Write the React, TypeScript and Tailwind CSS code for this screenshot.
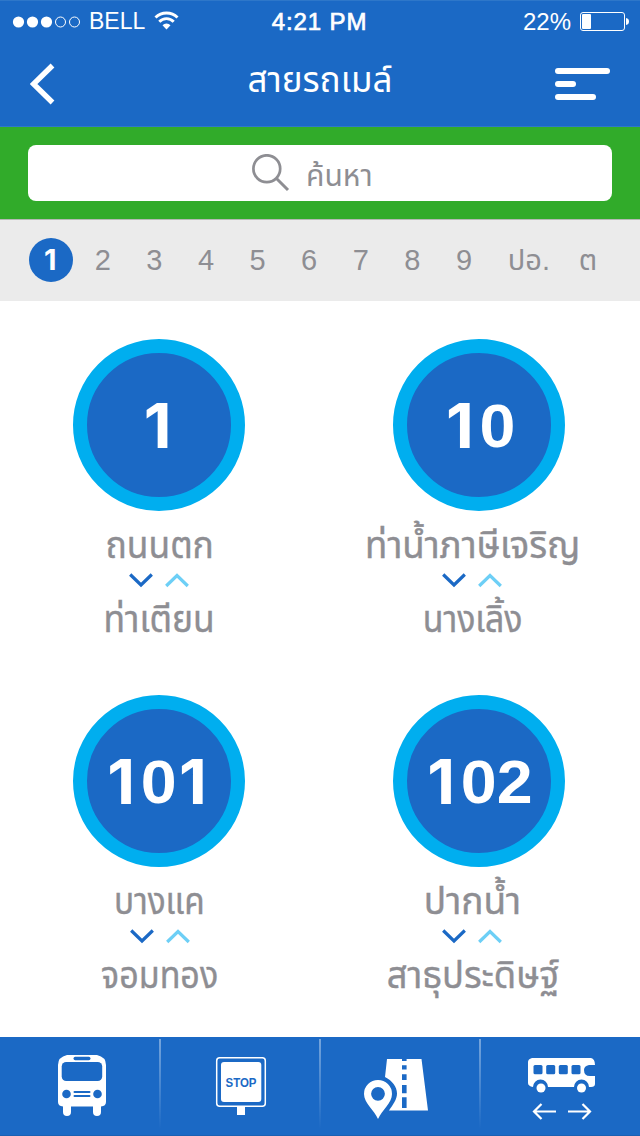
import type { ReactNode } from "react";

type Route = { no: string; from: string; to: string; fromClass: string; toClass: string };

const routes: Route[] = [
  { no: "1", from: "ถนนตก", to: "ท่าเตียน", fromClass: "scale-x-[0.955]", toClass: "scale-x-[0.957]" },
  { no: "10", from: "ท่าน้ำภาษีเจริญ", to: "นางเลิ้ง", fromClass: "scale-x-[0.99]", toClass: "scale-x-[0.915]" },
  { no: "101", from: "บางแค", to: "จอมทอง", fromClass: "scale-x-[0.9]", toClass: "scale-x-[0.92]" },
  { no: "102", from: "ปากน้ำ", to: "สาธุประดิษฐ์", fromClass: "", toClass: "scale-x-[0.98]" },
];

const digits = ["2", "3", "4", "5", "6", "7", "8", "9"];

// Inter has a "1" without a foot, the other digits stay in Liberation Sans
function Digits({ value }: { value: string }) {
  return (
    <span className="flex font-bold">
      {value.split("").map((d, i) => (
        <span
          key={i}
          className={`flex w-[0.556em] justify-center ${d === "1" ? "pr-[0.05em] font-['Inter',sans-serif]" : ""}`}
        >
          {d}
        </span>
      ))}
    </span>
  );
}

function StatusBar() {
  return (
    <div className="flex h-[41px] items-center justify-between pl-3 pr-[10px] text-white">
      <div className="flex w-[240px] items-center">
        <svg width="70" height="14" viewBox="0 0 70 14" fill="#fff">
          <circle cx="6.5" cy="7" r="5.6" />
          <circle cx="20.5" cy="7" r="5.6" />
          <circle cx="34.5" cy="7" r="5.6" />
          <circle cx="48.5" cy="7" r="5" fill="none" stroke="#fff" />
          <circle cx="62.5" cy="7" r="5" fill="none" stroke="#fff" />
        </svg>
        <span className="ml-[7px] text-[23px] leading-[41px]">BELL</span>
        <svg className="ml-[9px] -mt-[2px]" width="25" height="19" viewBox="0 0 25 19" fill="none" stroke="#fff" strokeWidth="2.9">
          <path d="M1.5 6.6a15.5 15.5 0 0 1 22 0" />
          <path d="M5.3 10.7a10 10 0 0 1 14.4 0" />
          <path d="M12.5 18.4l-4-4.2a5.7 5.7 0 0 1 8 0z" fill="#fff" stroke="none" />
        </svg>
      </div>
      <span className="-ml-[3px] text-[24px] leading-[41px] tracking-[0.9px] [-webkit-text-stroke:0.7px_white]">4:21 PM</span>
      <div className="flex w-[240px] items-center justify-end">
        <span className="mr-[9px] text-[24px] leading-[41px]">22%</span>
        <svg width="50" height="20" viewBox="0 0 50 20" fill="#fff">
          <rect x="0.5" y="0.5" width="44" height="18" rx="2.5" fill="none" stroke="#fff" />
          <rect x="2" y="2" width="9" height="15" rx="1" />
          <path d="M46 6c2 .3 3 1.5 3 3.500s-1 3.200-3 3.500z" />
        </svg>
      </div>
    </div>
  );
}

function TitleBar() {
  return (
    <div className="flex h-[83px] items-center justify-between px-[30px] text-white">
      <div className="w-[55px]">
        <svg width="26" height="42" viewBox="0 0 26 42" fill="none" stroke="#fff" strokeWidth="5.400">
          <path d="M22.500 2.500L3.500 21l19 18.500" />
        </svg>
      </div>
      <h1 className="-mt-[7px] text-[35px] leading-[76px]">สายรถเมล์</h1>
      <div className="flex w-[55px] flex-col gap-[7px]">
        <span className="h-[6px] w-[55px] rounded-full bg-white" />
        <span className="h-[6px] w-[21px] rounded-full bg-white" />
        <span className="h-[6px] w-[41px] rounded-full bg-white" />
      </div>
    </div>
  );
}

function SearchBar() {
  return (
    <div className="h-[92px] bg-[#31ab2a] px-[28px] pt-[18px]">
      <div className="flex h-[56px] items-center rounded-lg bg-white pl-[223px] text-[#8e8e93]">
        <svg width="39" height="38" viewBox="0 0 39 38" fill="none" stroke="#8e8e93" strokeWidth="2.700">
          <circle cx="15.800" cy="14.700" r="13.400" />
          <path d="M25.500 24.500L37 36" strokeWidth="3" />
        </svg>
        <span className="ml-4 pt-[5px] text-[30px] leading-[51px]">ค้นหา</span>
      </div>
    </div>
  );
}

function FilterBar() {
  return (
    <div className="flex h-[82px] items-center border-t border-[#b5b9b5] bg-[#ebebeb] pl-[29px] text-[29px] text-[#8e8e93]">
      <div className="-mt-[2px] flex size-11 items-center justify-center rounded-full bg-[#1b69c5] text-white">
        <Digits value="1" />
      </div>
      <div className="ml-1 flex">
        {digits.map((d) => (
          <span key={d} className="w-[51.600px] text-center">
            {d}
          </span>
        ))}
      </div>
      <span className="ml-[18px] w-[42px]">ปอ.</span>
      <span className="ml-[29px]">ต</span>
    </div>
  );
}

function RouteCard({ route }: { route: Route }) {
  return (
    <div className="group flex h-[356px] w-[320px] flex-col items-center pr-[2px]">
      <div className="flex size-[172px] items-center justify-center rounded-full border-[14px] border-[#00aeef] bg-[#1b69c5] text-[62px] text-white">
        <div className="scale-x-[1.04]">
          <Digits value={route.no} />
        </div>
      </div>
      <div className="mt-[11px] flex flex-col items-center whitespace-nowrap text-[37px] leading-[48px] text-[#8e8e93] group-odd:-mr-px group-even:-ml-[13px]">
        <span className={`inline-block [-webkit-text-stroke:0.4px_#8e8e93] ${route.fromClass}`}>{route.from}</span>
        <svg className="mt-[2px] group-even:-ml-px" width="60" height="16" viewBox="0 0 60 16" fill="none" strokeWidth="3.200">
          <path d="M1.200 2.500L12 13l10.800-10.500" stroke="#1b69c5" />
          <path d="M37.200 14L48 3.500 58.800 14" stroke="#6dcff6" />
        </svg>
        <span className={`mt-[8px] inline-block [-webkit-text-stroke:0.4px_#8e8e93] ${route.toClass}`}>{route.to}</span>
      </div>
    </div>
  );
}

function Tab({ children, last }: { children: ReactNode; last?: boolean }) {
  return (
    <div className="flex h-full w-[160px] justify-end">
      <div className="flex-1">{children}</div>
      {!last && <div className="-mr-px mt-[2px] h-[90px] w-[2px] bg-gradient-to-b from-white/40 to-transparent" />}
    </div>
  );
}

function Footer() {
  return (
    <nav className="flex h-[99px] border-b border-[#1a60b3] bg-[#1b69c5]">
      <Tab>
        <svg width="158" height="98" viewBox="0 0 158 98" fill="#fff">
          <path d="M67 18h30q9 2 9 10v37q0 4-5 4.500V75a3.800 3.800 0 0 1-8 0v-5.500H71V75a3.800 3.800 0 0 1-8 0v-5.500q-5-.5-5-4.500V28q0-8 9-10z" />
          <g fill="#1b69c5">
            <rect x="73.500" y="19.700" width="17" height="3.500" rx="1.700" />
            <rect x="61.700" y="25" width="40.500" height="19" rx="4.500" />
            <circle cx="66.500" cy="57" r="4.300" />
            <circle cx="97.500" cy="57" r="4.300" />
            <rect x="73.500" y="54" width="17" height="2" rx="1" />
            <rect x="73.500" y="58" width="17" height="2" rx="1" />
          </g>
        </svg>
      </Tab>
      <Tab>
        <svg width="158" height="98" viewBox="0 0 158 98" fill="#fff">
          <rect x="56.700" y="20.700" width="48.600" height="48.600" rx="3" fill="none" stroke="#fff" strokeWidth="1.500" />
          <rect x="61" y="25" width="40.300" height="40" rx="3" />
          <rect x="77" y="69" width="8" height="9" />
          <text x="81" y="50.300" textAnchor="middle" textLength="31" lengthAdjust="spacingAndGlyphs" fill="#1b69c5" className="text-[12px] font-bold">STOP</text>
        </svg>
      </Tab>
      <Tab>
        <svg width="158" height="98" viewBox="0 0 158 98" fill="#fff">
          <path d="M67 22h34.500l6.500 51.500H69c4-6 8-11 8-17 0-7-5-13-12-16.500z" />
          <path d="M84.300 22v49" stroke="#1b69c5" strokeWidth="4.600" strokeDasharray="2 4.300 4.300 4.700 5.700 5 8.300 4 10.700 10" />
          <path fillRule="evenodd" d="M58 82c-4-9-14-16-14-25a14 14 0 0 1 28 0c0 9-10 16-14 25zm0-18.300a6.900 6.900 0 1 0 0-13.800 6.900 6.900 0 0 0 0 13.800z" />
        </svg>
      </Tab>
      <Tab last>
        <svg width="160" height="98" viewBox="0 0 160 98" fill="#fff">
          <path d="M52 21h59q4 1 4 7h-6q-5 1-5 5 0 6 6 6h5v8q0 3-4 3h-2a7.500 7.500 0 0 0-15 0H68a7.500 7.500 0 0 0-15 0q-5-1-5-4V25q0-3 4-4z" />
          <g fill="#1b69c5">
            <rect x="53.500" y="28" width="9" height="9.300" rx="1.500" />
            <rect x="66.200" y="28" width="9" height="9.300" rx="1.500" />
            <rect x="78.800" y="28" width="9" height="9.300" rx="1.500" />
            <rect x="91.500" y="28" width="9" height="9.300" rx="1.500" />
          </g>
          <circle cx="61" cy="51" r="4.500" />
          <circle cx="101.500" cy="51" r="4.500" />
          <path d="M76 74.500H54.500m7-7.500l-7.500 7.500 7.500 7.500M88 74.500h21.500m-7-7.500l7.500 7.500-7.500 7.500" fill="none" stroke="#fff" strokeWidth="2.200" />
        </svg>
      </Tab>
    </nav>
  );
}

export default function App() {
  return (
    <main className="flex h-[1136px] w-[640px] flex-col overflow-hidden bg-white font-['Liberation_Sans','Noto_Sans_Thai',sans-serif]">
      <header className="h-[127px] border-y border-[#2e77c9] bg-[#1b69c5]">
        <StatusBar />
        <TitleBar />
      </header>
      <SearchBar />
      <FilterBar />
      <section className="flex h-[736px] flex-wrap content-start pt-[38px]">
        {routes.map((route) => (
          <RouteCard key={route.no} route={route} />
        ))}
      </section>
      <Footer />
    </main>
  );
}
